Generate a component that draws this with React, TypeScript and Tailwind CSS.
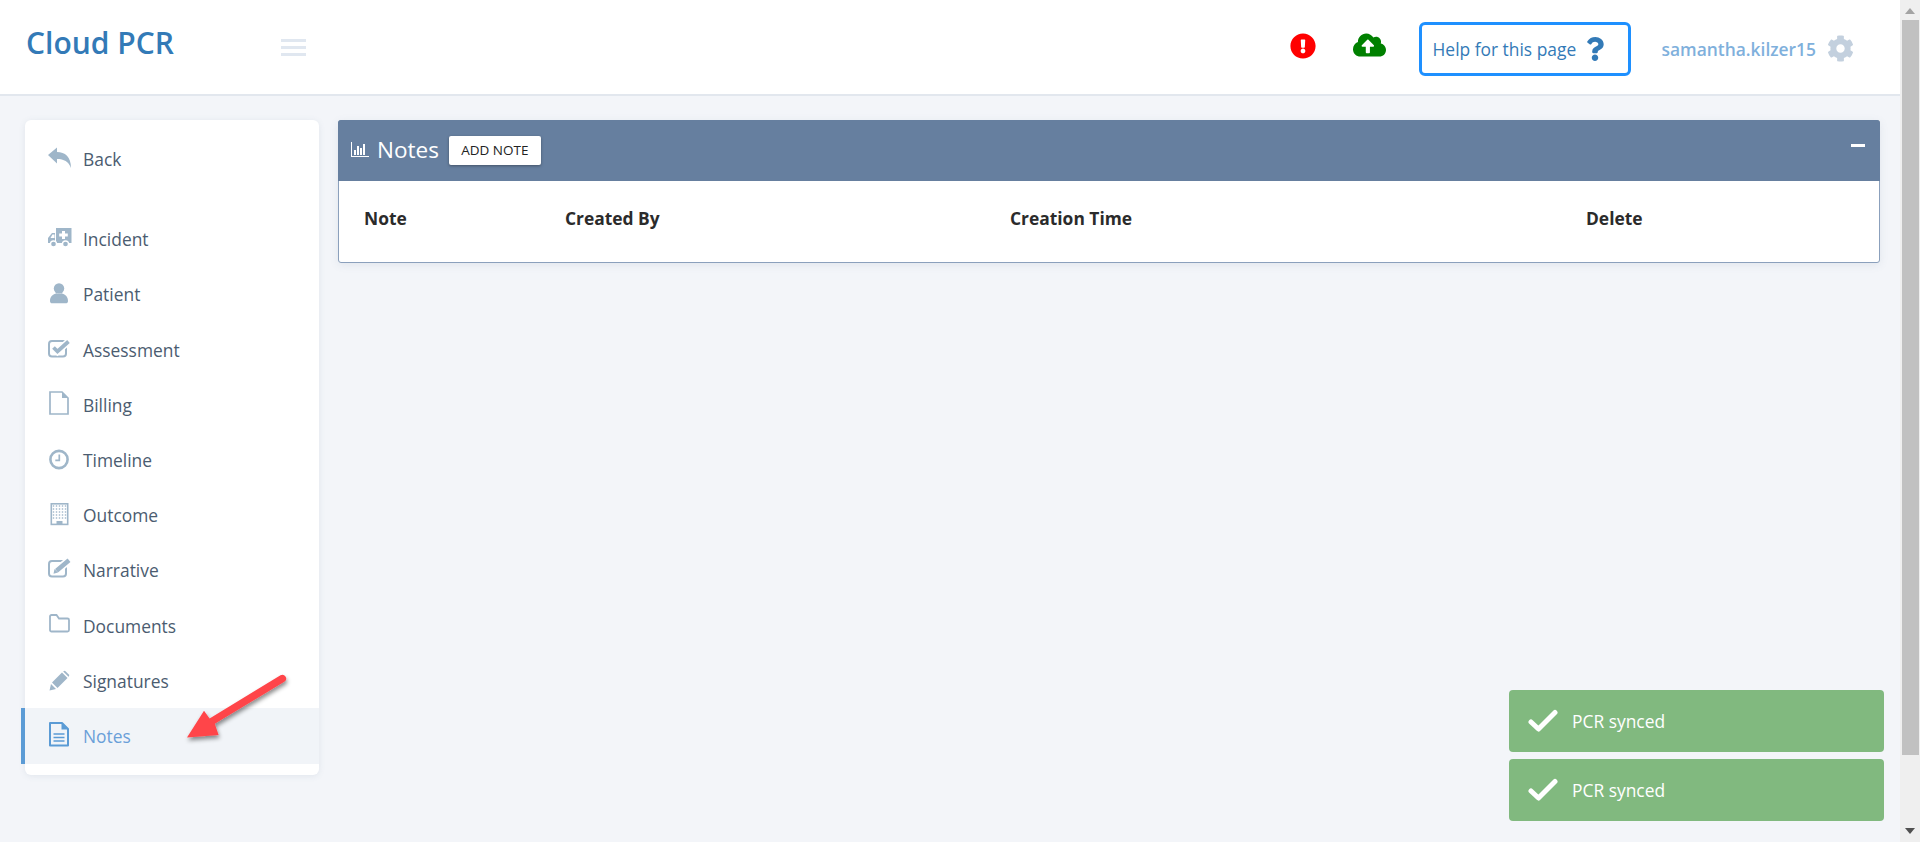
import React from "react";
import { FaQuestion, FaCog, FaExclamationCircle, FaCloudUploadAlt } from "react-icons/fa";

function Ico({ children }: { children: React.ReactNode }) {
  return (
    <svg viewBox="0 0 24 24" className="h-[24px] w-[24px] overflow-visible" fill="currentColor">
      {children}
    </svg>
  );
}

const back = <Ico><path d="M1 8 10 .5V5c8 0 14 4.500 14 16-2.500-6.500-7-9-14-9v4.500z" /></Ico>;
const ambulance = (
  <Ico>
    <path d="M9 1h15.500v15H9z" />
    <path d="M8 6H5L1 11v5h7z" />
    <path d="M5.500 7.500h2v3.500h-4z" fill="#fff" />
    <path d="M15 4h3v2.500h2.800v3H18V12h-3V9.500h-2.800v-3H15z" fill="#fff" />
    <circle cx="6.500" cy="17" r="3" stroke="#fff" strokeWidth="1.300" />
    <circle cx="18.500" cy="17" r="3" stroke="#fff" strokeWidth="1.300" />
  </Ico>
);
const patient = (
  <Ico>
    <circle cx="12" cy="6.500" r="5.200" />
    <path d="M3 19c0-5 3-6.500 6.500-7.800q2.500 1.800 5 0C18 12.500 21 14 21 19c0 1.500-.8 2.300-2.500 2.300h-13C3.800 21.300 3 20.500 3 19z" />
  </Ico>
);
const assess = (
  <Ico>
    <rect x="2" y="3" width="17" height="15.500" rx="3" fill="none" stroke="currentColor" strokeWidth="2" />
    <path d="M6.500 9.500l4 4L21.500 3.500" fill="none" stroke="#fff" strokeWidth="7" />
    <path d="M6.500 9.500l4 4L21.500 3.500" fill="none" stroke="currentColor" strokeWidth="3.800" />
  </Ico>
);
const billing = (
  <Ico>
    <path d="M3 -1H15L21 5V21H3z" fill="none" stroke="currentColor" strokeWidth="1.700" />
    <path d="M15 -1V5H21z" />
  </Ico>
);
const clock = (
  <Ico>
    <circle cx="12" cy="11.500" r="8.600" fill="none" stroke="currentColor" strokeWidth="2.600" />
    <path d="M12.300 6.500V12.300H8.300" fill="none" stroke="currentColor" strokeWidth="1.700" />
  </Ico>
);
const building = (
  <Ico>
    <rect x="4.300" y=".8" width="16.400" height="20.600" fill="none" stroke="currentColor" strokeWidth="1.600" />
    {[3, 6, 9, 12, 15].map((y) =>
      [6.500, 9.500, 12.500, 15.500, 18.500].map((x) => (
        <rect key={`${x}-${y}`} x={x - 0.7} y={y - 0.7} width="1.400" height="1.400" />
      ))
    )}
    <path d="M9.500 18H15.500V22H9.500z" />
  </Ico>
);
const edit = (
  <Ico>
    <rect x="2" y="3" width="17" height="15.500" rx="3" fill="none" stroke="currentColor" strokeWidth="2" />
    <path d="M8 14L21 3" fill="none" stroke="#fff" strokeWidth="8" />
    <path d="M9.500 12.800L22 2.300" fill="none" stroke="currentColor" strokeWidth="4.500" />
    <path d="M6.500 15.800L7.500 11 11 14.500z" />
  </Ico>
);
const folder = (
  <Ico>
    <path
      d="M3 16V2.500A1.500 1.500 0 0 1 4.500 1H9.500L12 4.500H20.500A1.500 1.500 0 0 1 22 6V16A1.500 1.500 0 0 1 20.500 17.500H4.500A1.500 1.500 0 0 1 3 16z"
      fill="none"
      stroke="currentColor"
      strokeWidth="1.800"
    />
  </Ico>
);
const pencil = (
  <Ico>
    <path d="M2.500 21.500 4 15l5 5z" />
    <path d="M5 13.500 15 3.500 20.500 9 10.500 19z" />
    <path d="M16.500 2.200a1.500 1.500 0 0 1 2 0l3.300 3.300a1.500 1.500 0 0 1 0 2L21.500 7.800 16.200 2.500z" />
  </Ico>
);
const notes = (
  <Ico>
    <path d="M3 -1H15L21 5V21.500H3z" fill="none" stroke="currentColor" strokeWidth="2" strokeLinejoin="round" />
    <path d="M14.500 -1V5.500H21z" />
    <path d="M6.500 10H17.500M6.500 13.500H17.500M6.500 17H17.500" fill="none" stroke="currentColor" strokeWidth="1.700" />
  </Ico>
);

const items: [string, React.ReactNode][] = [
  ["Incident", ambulance],
  ["Patient", patient],
  ["Assessment", assess],
  ["Billing", billing],
  ["Timeline", clock],
  ["Outcome", building],
  ["Narrative", edit],
  ["Documents", folder],
  ["Signatures", pencil],
];

function NavItem({ label, icon, active }: { label: string; icon: React.ReactNode; active?: boolean }) {
  return (
    <div
      className={
        active
          ? "flex h-[55.2px] items-center -ml-[4px] border-l-4 border-[#5b9bd5] bg-[#f1f4f8] pl-[22px] text-[#6a9fd8]"
          : "flex h-[55.2px] items-center pl-[22px] text-[#4b5c70]"
      }
    >
      <span className={active ? "flex w-[36px] items-center text-[#5b9bd5]" : "flex w-[36px] items-center text-[#9fb6c9]"}>{icon}</span>
      <span className="text-[17.4px]">{label}</span>
    </div>
  );
}

function Toast() {
  return (
    <div className="flex h-[62px] w-[375px] items-center rounded-[4px] bg-[#81b97f] pl-[19px] text-white">
      <svg viewBox="0 0 30 24" className="h-[24px] w-[30px]">
        <path d="M3 13l7.500 7L27 3.500" fill="none" stroke="#fff" strokeWidth="5" strokeLinecap="round" strokeLinejoin="round" />
      </svg>
      <span className="ml-[14px] text-[17.4px]">PCR synced</span>
    </div>
  );
}

export default function App() {
  return (
    <div className="relative flex h-[842px] overflow-hidden bg-[#f3f5f9] [font-family:'Open_Sans',sans-serif]">
      <div className="flex min-w-0 flex-1 flex-col">
        <header className="flex h-[96px] shrink-0 items-center border-b-2 border-[#e2e7ee] bg-white">
          <div className="ml-[26px] w-[255px] text-[30px] font-semibold leading-none text-[#337ab7] -mt-[8px]">Cloud PCR</div>
          <div className="flex w-[25px] flex-col gap-[4px]">
            <span className="h-[3px] bg-[#e0e7f0]" />
            <span className="h-[3px] bg-[#e0e7f0]" />
            <span className="h-[3px] bg-[#e0e7f0]" />
          </div>
          <div className="ml-auto flex items-center pr-[46px]">
            <FaExclamationCircle className="mb-[2px] h-[26px] w-[26px] text-[#ff0000]" />
            <FaCloudUploadAlt className="mb-[5px] ml-[37px] h-[32px] w-[33px] text-[#008000]" />
            <div className="ml-[33px] mt-[4px] flex h-[54px] w-[212px] items-center rounded-[6px] border-[3px] border-[#1e90ff] pl-[11px] text-[17.4px] text-[#337ab7]">
              Help for this page
              <FaQuestion className="ml-[10px] h-[24px] w-[18px]" />
            </div>
            <span className="ml-[31px] mt-[4px] text-[17.4px] font-semibold text-[#7fb0dc]">samantha.kilzer15</span>
            <FaCog className="ml-[11px] mt-[2px] h-[27px] w-[27px] text-[#c3d0de]" />
          </div>
        </header>
        <main className="flex flex-1 items-start gap-[19px] pl-[25px] pr-[20px] pt-[24px]">
          <aside className="w-[294px] shrink-0 rounded-[6px] bg-white pb-[11px] pt-[11.5px] shadow-[0_1px_6px_rgba(100,120,150,0.12)]">
            <div className="mb-[25px]">
              <NavItem label="Back" icon={back} />
            </div>
            {items.map(([label, icon]) => (
              <NavItem key={label} label={label} icon={icon} />
            ))}
            <NavItem active label="Notes" icon={notes} />
          </aside>
          <section className="h-[143px] min-w-0 flex-1 rounded-[3px] border border-[#8ba0bc] bg-white shadow-[0_2px_8px_rgba(100,120,150,0.12)]">
            <div className="-m-px flex h-[61px] items-center rounded-t-[3px] bg-[#667f9f] pl-[13px] pr-[15px] text-white">
              <svg viewBox="0 0 18 15" className="mb-[3px] h-[15px] w-[18px]" fill="currentColor">
                <path d="M0 0h1v14h17v1H0zM3 8h2v5H3zM6 4h2v9H6zM9 6h2v7H9zM12 2h2v11h-2z" />
              </svg>
              <span className="ml-[8px] text-[22.5px] leading-none">Notes</span>
              <span className="ml-[10px] flex h-[29px] w-[92px] items-center justify-center rounded-[2px] bg-white text-[13.5px] font-medium text-[#222] shadow-[0_1px_3px_rgba(0,0,0,0.35)]">
                ADD NOTE
              </span>
              <span className="ml-auto mb-[10px] h-[3px] w-[14px] bg-white" />
            </div>
            <div className="grid grid-cols-[201px_445px_576px_1fr] pl-[25px] pt-[26px] text-[17.4px] font-bold leading-[24px] text-[#2b2b2b]">
              <span>Note</span>
              <span>Created By</span>
              <span>Creation Time</span>
              <span>Delete</span>
            </div>
          </section>
        </main>
      </div>

      <div className="flex w-[20px] shrink-0 flex-col items-center bg-[#efefef]">
        <svg viewBox="0 0 10 6" className="mt-[8px] mb-[6px] h-[6px] w-[10px]"><path d="M0 6 5 0l5 6z" fill="#a3a3a3" /></svg>
        <div className="h-[735px] w-[17px] bg-[#c1c1c1]" />
        <svg viewBox="0 0 10 6" className="mt-auto mb-[8px] h-[6px] w-[10px]"><path d="M0 0h10L5 6z" fill="#505050" /></svg>
      </div>

      <div className="absolute bottom-[21px] right-[36px] flex flex-col gap-[7px]">
        <Toast />
        <Toast />
      </div>

      <svg className="absolute left-[170px] top-[660px] h-[100px] w-[130px]" viewBox="170 660 130 100">
        <defs>
          <filter id="s" x="-20%" y="-20%" width="140%" height="150%">
            <feDropShadow dx="1" dy="3" stdDeviation="2" floodColor="#000" floodOpacity="0.45" />
          </filter>
        </defs>
        <path
          filter="url(#s)"
          fill="#ff4549"
          d="M280.500 675.300a3.800 3.800 0 0 1 4.200 6.300L214.800 723.800 218.600 735 187 737.600 204 710.800 209.600 718.600z"
        />
      </svg>
    </div>
  );
}
